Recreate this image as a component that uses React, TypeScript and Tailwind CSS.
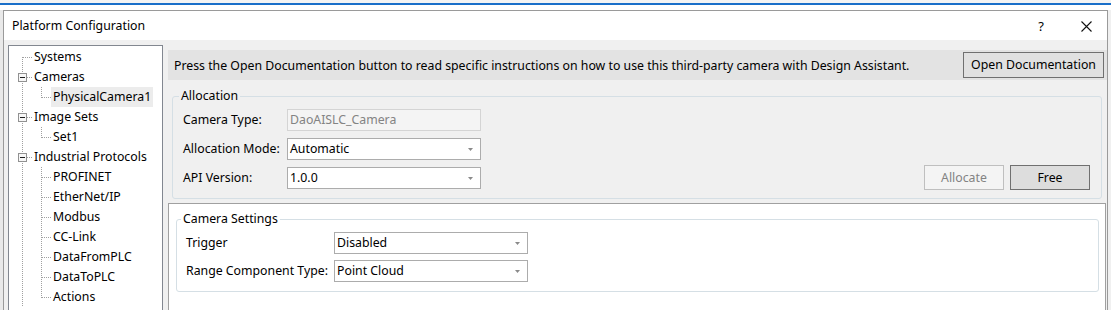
import React from 'react';

type TreeRow = {
  label: string;
  level: 0 | 1;
  expander?: boolean;
  first?: boolean;
  lastChild?: boolean;
  selected?: boolean;
};

const treeRows: TreeRow[] = [
  { label: 'Systems', level: 0, first: true },
  { label: 'Cameras', level: 0, expander: true },
  { label: 'PhysicalCamera1', level: 1, lastChild: true, selected: true },
  { label: 'Image Sets', level: 0, expander: true },
  { label: 'Set1', level: 1, lastChild: true },
  { label: 'Industrial Protocols', level: 0, expander: true },
  { label: 'PROFINET', level: 1 },
  { label: 'EtherNet/IP', level: 1 },
  { label: 'Modbus', level: 1 },
  { label: 'CC-Link', level: 1 },
  { label: 'DataFromPLC', level: 1 },
  { label: 'DataToPLC', level: 1 },
  { label: 'Actions', level: 1, lastChild: true },
];

const DOT = '#a0a0a0';

function Connector({ row }: { row: TreeRow }) {
  if (row.level === 0) {
    return (
      <svg width="23" height="20" className="shrink-0" shapeRendering="crispEdges">
        <line x1="13.5" y1={row.first ? 10 : 0} x2="13.5" y2="20" stroke={DOT} strokeDasharray="1 1" />
        <line x1={row.expander ? 18 : 14} y1="10.5" x2="23" y2="10.5" stroke={DOT} strokeDasharray="1 1" />
        {row.expander && (
          <g>
            <rect x="9.5" y="6.5" width="8" height="8" fill="#f7f7f7" stroke="#919191" />
            <line x1="11" y1="10.5" x2="16" y2="10.5" stroke="#1c1c1c" />
          </g>
        )}
      </svg>
    );
  }
  return (
    <svg width="42" height="20" className="shrink-0" shapeRendering="crispEdges">
      <line x1="13.5" y1="0" x2="13.5" y2="20" stroke={DOT} strokeDasharray="1 1" />
      <line x1="32.5" y1="0" x2="32.5" y2={row.lastChild ? 11 : 20} stroke={DOT} strokeDasharray="1 1" />
      <line x1="33" y1="10.5" x2="42" y2="10.5" stroke={DOT} strokeDasharray="1 1" />
    </svg>
  );
}

function Combo({ value, disabled = false, arrow = true }: { value: string; disabled?: boolean; arrow?: boolean }) {
  return (
    <div
      className={`flex h-[22px] w-[194px] items-center justify-between border pl-[2px] pr-[7px] ${
        disabled ? 'border-[#d4d4d4] bg-[#f4f4f4] text-[#838383]' : 'border-[#acacac] bg-white text-black'
      }`}
    >
      <span>{value}</span>
      {arrow && (
        <svg width="5" height="3" viewBox="0 0 5 3">
          <path d="M0 0h5L2.5 3z" fill="#8a8a8a" />
        </svg>
      )}
    </div>
  );
}

function FieldRow({ label, labelWidth, children }: { label: string; labelWidth: string; children: React.ReactNode }) {
  return (
    <div className="flex h-[22px] items-center">
      <span className={labelWidth}>{label}</span>
      {children}
    </div>
  );
}

export default function App() {
  return (
    <div className="flex h-[310px] w-[1111px] flex-col overflow-hidden bg-[#f0f0f0] font-['Noto_Sans',sans-serif] text-[12.3px] leading-[16px] text-black">
      {/* desktop strip behind the dialog */}
      <div className="h-[3px] bg-[#f4f4f4]" />
      <div className="h-[2px] bg-[#1a6fc9]" />
      <div className="h-[5px] bg-white" />

      <div className="flex min-h-0 flex-1">
        <div className="w-[3px] bg-[#e9e9e9]" />

        {/* dialog */}
        <div className="flex w-[1105px] flex-col border-l border-r border-t border-[#9a9a9a] bg-[#f0f0f0]">
          {/* title bar */}
          <div className="flex h-[29px] shrink-0 items-center bg-white pl-[8px] pt-[1px]">
            <span className="text-[12.3px]">Platform Configuration</span>
            <span className="ml-auto mr-[37px] text-[13px]">?</span>
            <svg width="11" height="11" viewBox="0 0 11 11" className="mr-[15px]">
              <path d="M0.5 0.5l10 10M10.5 0.5l-10 10" stroke="#111" strokeWidth="1.1" />
            </svg>
          </div>

          {/* body */}
          <div className="flex min-h-0 flex-1 overflow-hidden pl-[4px] pt-[5px]">
            {/* tree */}
            <div className="h-[290px] w-[155px] shrink-0 border border-[#828790] bg-white pt-[1px]">
              {treeRows.map((row) => (
                <div key={row.label} className="flex h-[20px] items-center">
                  <Connector row={row} />
                  <span className={`px-[2px] leading-[20px] ${row.selected ? 'bg-[#ececec]' : ''}`}>{row.label}</span>
                </div>
              ))}
            </div>

            {/* right column */}
            <div className="ml-[5px] flex min-w-0 flex-1 flex-col pt-[5px]">
              <div className="flex h-[30px] shrink-0 items-center justify-between bg-[#e3e3e3] pl-[6px] pr-[3px]">
                <span className="pt-[1px]">
                  Press the Open Documentation button to read specific instructions on how to use this third-party camera with
                  Design Assistant.
                </span>
                <button className="h-[26px] w-[141px] border border-[#707070] bg-[#e1e1e1]">Open Documentation</button>
              </div>

              {/* Allocation */}
              <fieldset className="ml-[4px] mr-[5px] mt-[8px] rounded-[3px] border border-[#d5dfe5] px-0 pb-[9px] pt-[5px]">
                <legend className="ml-[6px] px-[2px]">Allocation</legend>
                <div className="flex items-end justify-between pl-[10px] pr-[11px]">
                  <div className="flex flex-col gap-[7px]">
                    <FieldRow label="Camera Type:" labelWidth="w-[104px]">
                      <Combo value="DaoAISLC_Camera" disabled arrow={false} />
                    </FieldRow>
                    <FieldRow label="Allocation Mode:" labelWidth="w-[104px]">
                      <Combo value="Automatic" />
                    </FieldRow>
                    <FieldRow label="API Version:" labelWidth="w-[104px]">
                      <Combo value="1.0.0" />
                    </FieldRow>
                  </div>
                  <div className="mb-[-1px] flex gap-[6px]">
                    <button className="h-[25px] w-[80px] border border-[#bfbfbf] bg-[#f4f4f4] text-[#838383]">Allocate</button>
                    <button className="h-[25px] w-[80px] border border-[#707070] bg-[#dddddd]">Free</button>
                  </div>
                </div>
              </fieldset>

              {/* Camera settings panel */}
              <div className="mr-[1px] mt-[4px] flex-1 border-l border-r border-t border-[#a0a0a0] bg-white pt-[7px]">
                <fieldset className="ml-[7px] mr-[6px] rounded-[3px] border border-[#d5dfe5] px-0 pb-[9px] pt-[5px]">
                  <legend className="ml-[4px] px-[2px]">Camera Settings</legend>
                  <div className="flex flex-col gap-[6px] pl-[9px]">
                    <FieldRow label="Trigger" labelWidth="w-[148px]">
                      <Combo value="Disabled" />
                    </FieldRow>
                    <FieldRow label="Range Component Type:" labelWidth="w-[148px]">
                      <Combo value="Point Cloud" />
                    </FieldRow>
                  </div>
                </fieldset>
              </div>
            </div>
          </div>
        </div>

        <div className="flex-1 bg-[#f0f0f0]" />
      </div>
    </div>
  );
}
